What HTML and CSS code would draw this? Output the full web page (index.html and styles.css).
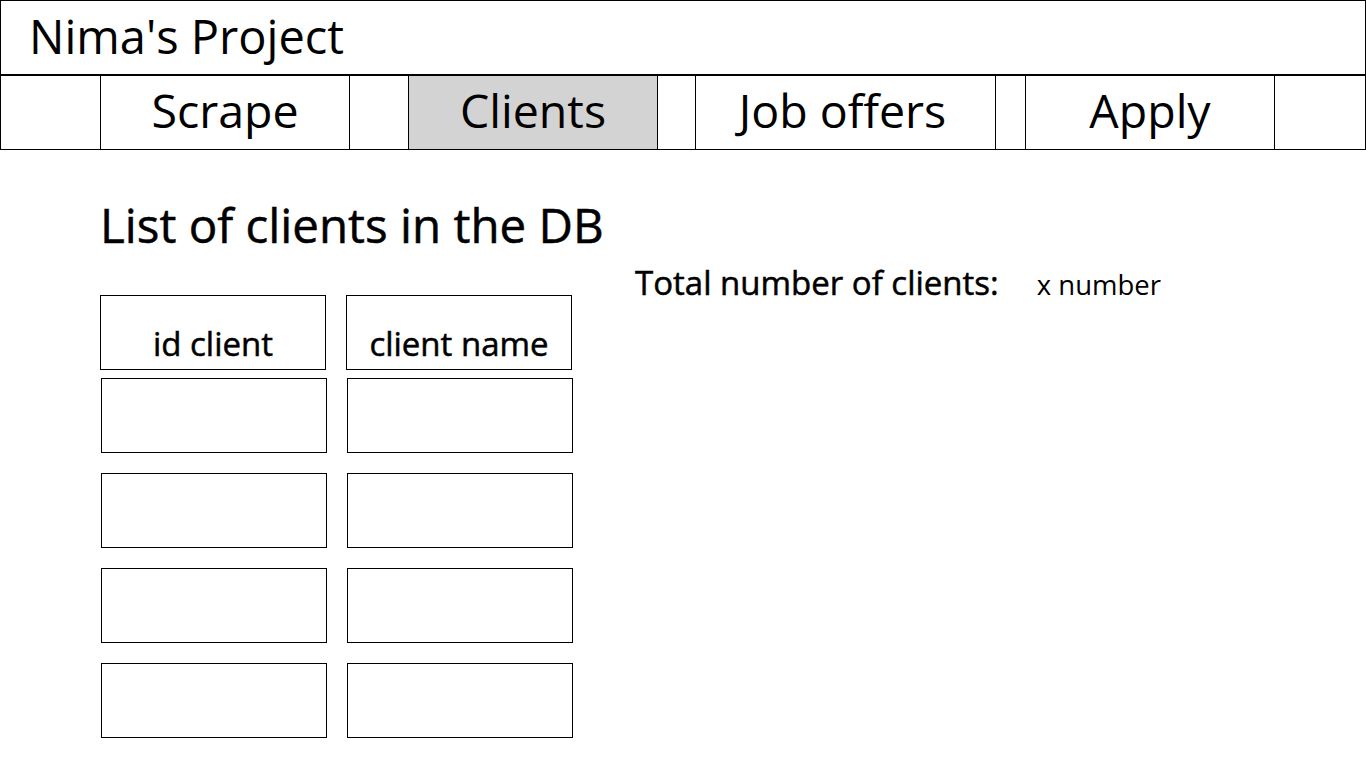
FILE: index.html
```html
<!DOCTYPE html>
<html lang="en">
<head>
<meta charset="utf-8">
<title>Nima's Project - Clients</title>
<link rel="stylesheet" href="styles.css">
</head>
<body>
<header class="site-header">
  <div class="brand">Nima's Project</div>
</header>
<nav class="nav">
  <a class="nav-item nav-scrape">Scrape</a>
  <a class="nav-item nav-clients active">Clients</a>
  <a class="nav-item nav-jobs">Job offers</a>
  <a class="nav-item nav-apply">Apply</a>
</nav>
<main class="content">
  <section class="list-col">
    <h1 class="title">List of clients in the DB</h1>
    <div class="table">
      <div class="table-head">
        <div class="th">id client</div>
        <div class="th">client name</div>
      </div>
      <div class="table-body">
        <div class="td"></div><div class="td"></div>
        <div class="td"></div><div class="td"></div>
        <div class="td"></div><div class="td"></div>
        <div class="td"></div><div class="td"></div>
      </div>
    </div>
  </section>
  <aside class="info">
    <span class="info-label">Total number of clients:</span>
    <span class="info-value">x number</span>
  </aside>
</main>
</body>
</html>
```

FILE: styles.css
```css
* { box-sizing: border-box; }

html, body {
  margin: 0;
  padding: 0;
  background: #fff;
  color: #000;
  font-family: "Open Sans", "Noto Sans", sans-serif;
}

.site-header {
  height: 75px;
  border: 1px solid #000;
  display: flex;
  align-items: center;
  padding-left: 28px;
}

.brand {
  font-size: 47px;
  line-height: 1;
  margin-top: -2px;
}

.nav {
  height: 75px;
  border: 1px solid #000;
  display: flex;
}

.nav-item {
  width: 250px;
  border-left: 1px solid #000;
  border-right: 1px solid #000;
  display: flex;
  align-items: center;
  justify-content: center;
  font-size: 46.5px;
  line-height: 1;
  padding-bottom: 4px;
  color: #000;
  text-decoration: none;
}

.nav-scrape { margin-left: 99px; }
.nav-clients { margin-left: 58px; }
.nav-jobs { margin-left: 37px; width: 301px; padding-right: 6px; }
.nav-apply { margin-left: 29px; }

.nav-item.active { background: #d3d3d3; }

.content {
  display: flex;
  padding-left: 100px;
}

.list-col {
  width: 535px;
}

.title {
  margin: 0;
  padding-top: 45px;
  font-size: 47.5px;
  font-weight: 400;
  line-height: 60px;
  -webkit-text-stroke: 0.5px #000;
}

.table {
  margin-top: 40px;
}

.table-head {
  display: grid;
  grid-template-columns: 226px 226px;
  column-gap: 20px;
}

.th {
  height: 75px;
  border: 1px solid #000;
  display: flex;
  align-items: flex-end;
  justify-content: center;
  font-size: 33px;
  font-weight: 400;
  line-height: 1;
  padding-bottom: 9px;
  -webkit-text-stroke: 0.5px #000;
}

.table-body {
  display: grid;
  grid-template-columns: 226px 226px;
  column-gap: 20px;
  row-gap: 20px;
  margin-top: 8px;
  padding-left: 1px;
}

.td {
  height: 75px;
  border: 1px solid #000;
}

.info {
  padding-top: 110px;
  display: flex;
  align-items: baseline;
  gap: 38px;
}

.info-label {
  font-size: 33px;
  -webkit-text-stroke: 0.5px #000;
}

.info-value {
  font-size: 27.5px;
}
```
